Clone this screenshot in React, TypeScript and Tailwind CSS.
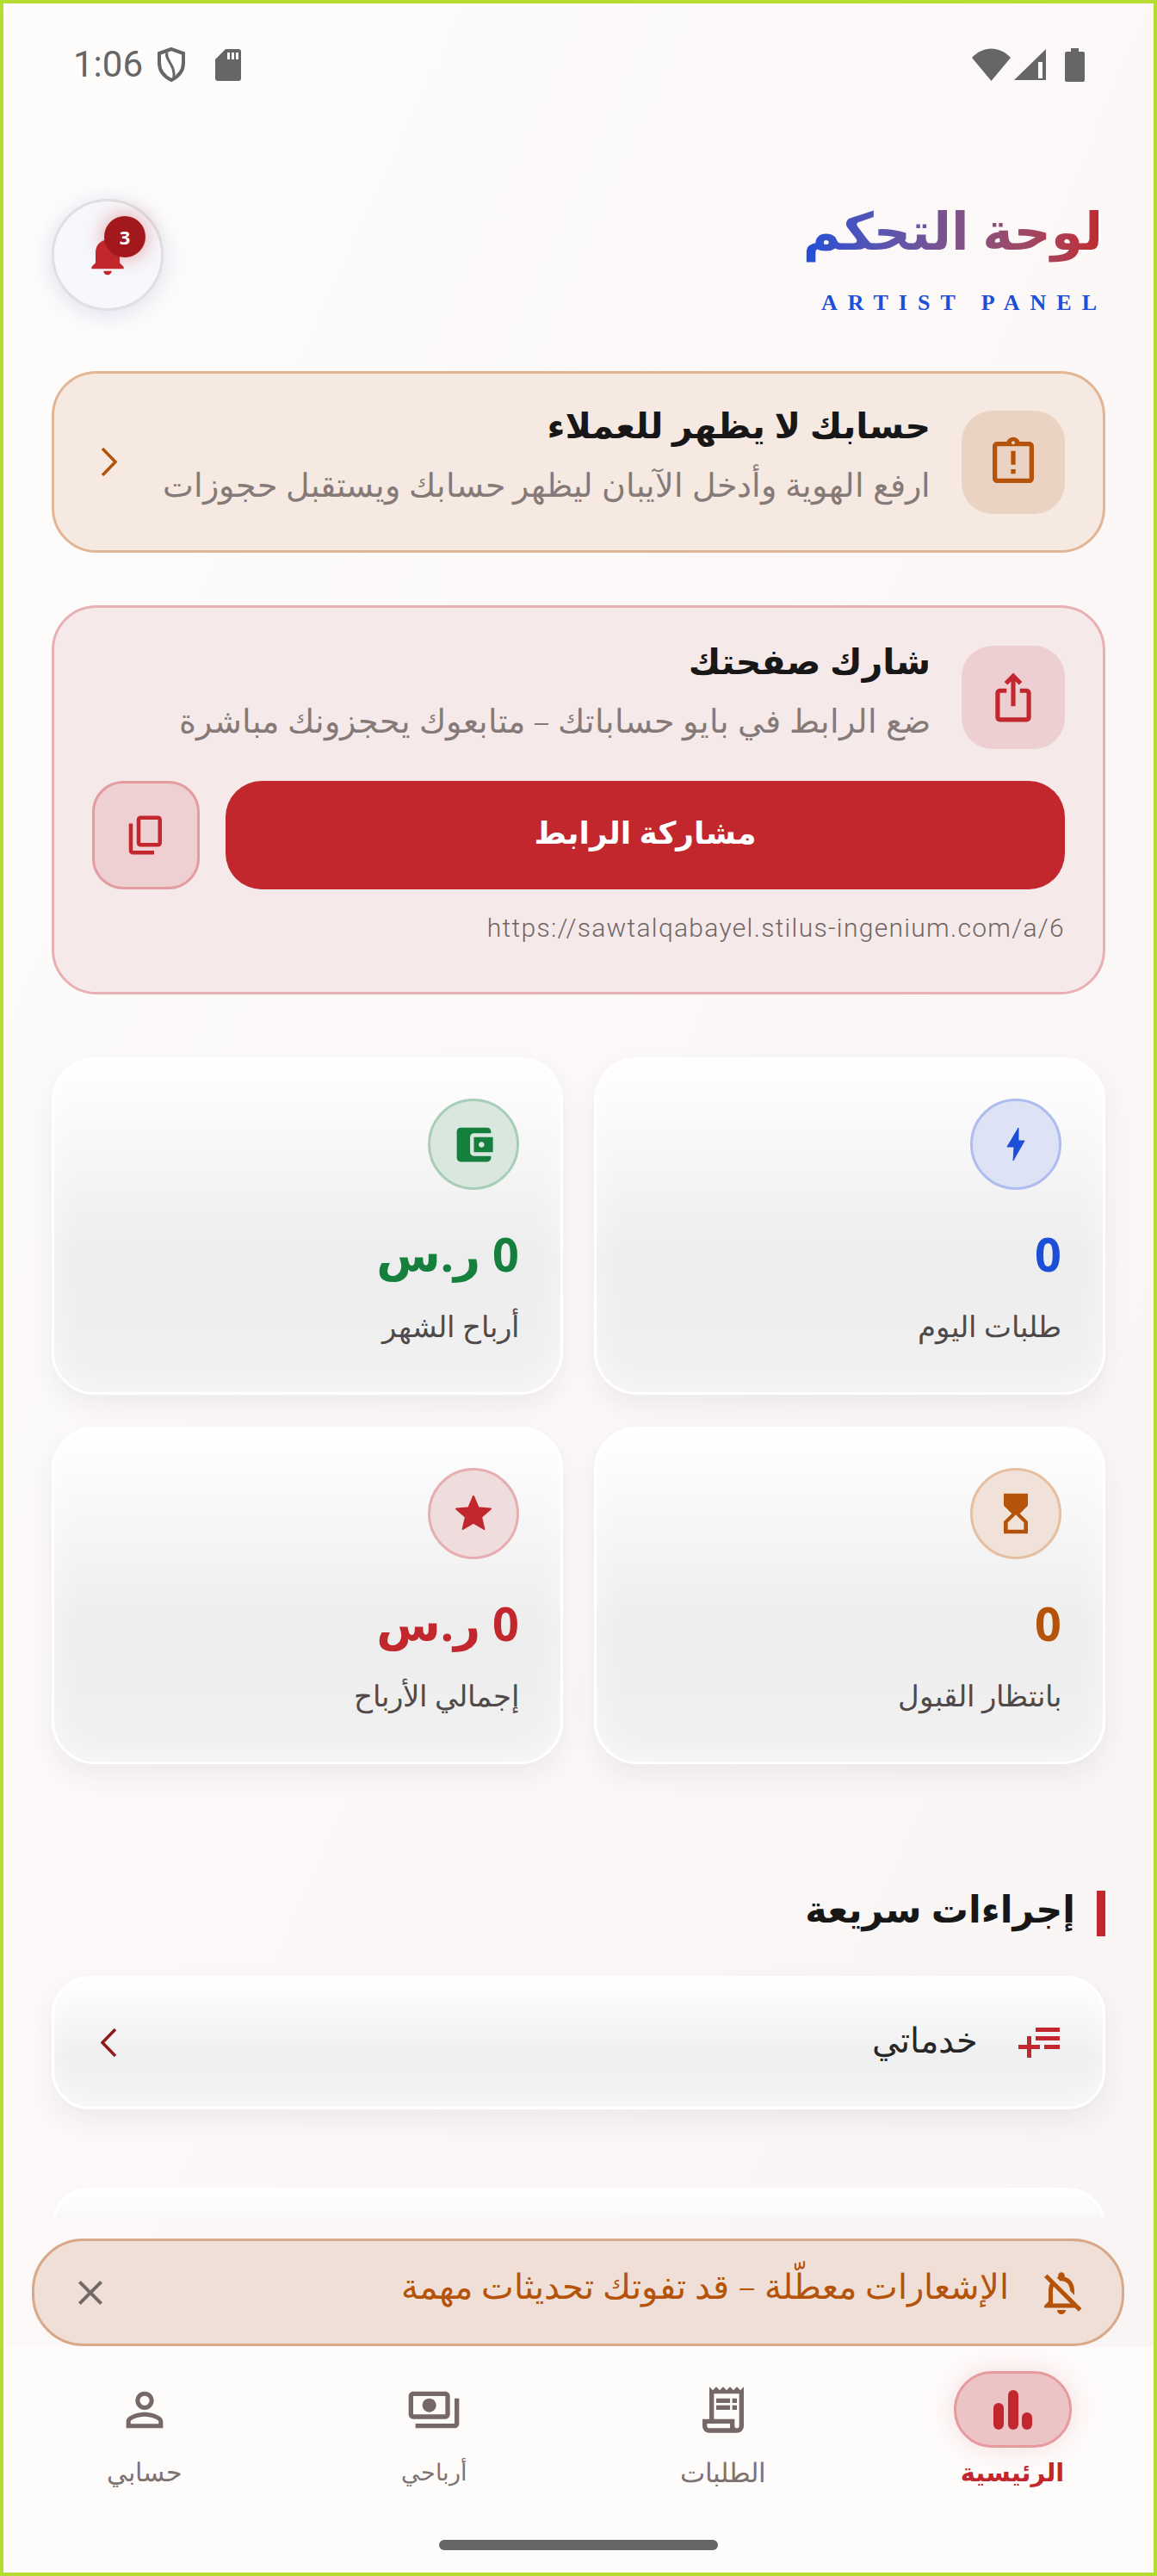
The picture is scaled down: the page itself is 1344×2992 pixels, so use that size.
const arabic = "font-['Noto_Sans','DejaVu_Sans',sans-serif]";

const stats = [
  { label: "طلبات اليوم", value: "0", color: "text-[#1d4ed8]", ring: "border-[#aebcf0] bg-[#dde3f4]", kind: "zap" },
  { label: "أرباح الشهر", value: "0 ر.س", color: "text-[#15803d]", ring: "border-[#a8cdb8] bg-[#d9e7df]", kind: "wallet" },
  { label: "بانتظار القبول", value: "0", color: "text-[#b45309]", ring: "border-[#e5bfa0] bg-[#f0e2d8]", kind: "hourglass" },
  { label: "إجمالي الأرباح", value: "0 ر.س", color: "text-[#c1272d]", ring: "border-[#e6aeb0] bg-[#efdcdd]", kind: "star" },
];

const StatIcon = ({ kind }: { kind: string }) => {
  if (kind === "zap")
    return (
      <svg viewBox="0 0 22 40" className="w-[22px] h-[40px]" fill="#1d4ed8" stroke="#1d4ed8" strokeLinejoin="round">
        <path d="M14 1 1 23h8l-1 16 13-23h-7z" />
      </svg>
    );
  if (kind === "star")
    return (
      <svg viewBox="0 0 24 24" className="w-12 h-12" fill="#c1272d" stroke="#c1272d" strokeLinejoin="round">
        <path d="M12 17.27 18.18 21l-1.64-7.03L22 9.24l-7.19-.61L12 2 9.19 8.63 2 9.24l5.46 4.73L5.82 21z" />
      </svg>
    );
  if (kind === "wallet")
    return (
      <svg viewBox="0 0 24 24" className="w-[53px] h-[53px]" fill="#15803d">
        <path d="M21 18v1c0 1.1-.9 2-2 2H5c-1.11 0-2-.9-2-2V5c0-1.1.89-2 2-2h14c1.1 0 2 .9 2 2v1h-9c-1.11 0-2 .9-2 2v8c0 1.1.89 2 2 2h9zm-9-2h10V8H12v8zm4-2.5c-.83 0-1.5-.67-1.5-1.5s.67-1.5 1.5-1.5 1.5.67 1.5 1.5-.67 1.5-1.5 1.5z" />
      </svg>
    );
  return (
    <svg viewBox="0 0 24 24" className="w-[56px] h-[56px]" fill="#b45309">
      <path d="M6 2v6h.01L6 8.01 10 12l-4 4 .01.01H6V22h12v-5.99h-.01L18 16l-4-4 4-3.99-.01-.01H18V2H6zm10 14.5V20H8v-3.5l4-4 4 4z" />
    </svg>
  );
};

const StatusBar = () => (
  <div dir="ltr" className="h-[142px] shrink-0 flex items-center justify-between pl-[81px] pr-[80px] text-[#666666]">
    <div className="flex items-center">
      <span className="font-['Roboto'] text-[42px] leading-none w-[97px]">1:06</span>
      <svg viewBox="0 0 34 41" className="w-[34px] h-[41px] mt-[1px]" fill="none" stroke="#666666" strokeWidth="4">
        <path d="M17 2 3 7v11c0 9 6 16 14 20 8-4 14-11 14-20V7z" />
        <path d="M12 6c-3 8 10 14 8 30" strokeWidth="3" />
      </svg>
      <svg viewBox="0 0 30 37" className="w-[30px] h-[37px] ml-[34px]" fill="#666666">
        <path d="M12 0h15a3 3 0 0 1 3 3v31a3 3 0 0 1-3 3H3a3 3 0 0 1-3-3V12z" />
        <path d="M14 4h3v8h-3zm5 0h3v8h-3zm5 0h3v8h-3z" fill="#fcfafa" />
      </svg>
    </div>
    <div className="flex items-center">
      <svg viewBox="0 0 45 38" className="w-[45px] h-[38px]" fill="#666666">
        <path d="M0 11C13-3 32-3 45 11L22.5 38z" />
      </svg>
      <svg viewBox="0 0 37 36" className="w-[37px] h-[36px] ml-[4px]" fill="#666666">
        <path d="M37 0v36H0z" />
        <path d="M28 15h5v19h-5z" fill="#fcfafa" />
      </svg>
      <svg viewBox="0 0 23 39" className="w-[23px] h-[39px] ml-[22px]" fill="#666666">
        <path d="M7 0h9v4h5a2 2 0 0 1 2 2v31a2 2 0 0 1-2 2H2a2 2 0 0 1-2-2V6a2 2 0 0 1 2-2h5z" />
      </svg>
    </div>
  </div>
);

const Header = () => (
  <div className="flex items-start justify-between h-[130px] mt-[85px] mb-[70px]">
    <div className="flex flex-col items-start mt-[-6px] mr-[3px]">
      <h1 className="text-[60px] leading-[84px] font-bold bg-gradient-to-l from-[#c1272d] to-[#1d4ed8] bg-clip-text text-transparent">
        لوحة التحكم
      </h1>
      <span dir="ltr" className="self-start font-['Liberation_Serif'] font-bold text-[26px] leading-[30px] tracking-[12px] text-[#1d4ed8] mt-[28px] mr-[-5px]">
        ARTIST PANEL
      </span>
    </div>
    <div className="relative w-[130px] h-[130px] rounded-full border-[3px] border-[#e2dfe2] bg-[#f7f8fc] shadow-[0_4px_28px_rgba(90,100,190,0.2)] flex items-center justify-center">
      <svg viewBox="0 0 24 24" className="w-[56px] h-[56px]" fill="#c1272d">
        <path d="M12 22c1.1 0 2-.9 2-2h-4c0 1.1.9 2 2 2zm6-6v-5c0-3.07-1.63-5.64-4.5-6.32V4c0-.83-.67-1.5-1.5-1.5s-1.5.67-1.5 1.5v.68C7.64 5.36 6 7.92 6 11v5l-2 2v1h16v-1l-2-2z" />
      </svg>
      <span className="absolute left-[58px] top-[17px] w-[48px] h-[48px] rounded-full bg-[#a3181c] text-white text-[22px] font-bold font-['Noto_Sans'] flex items-center justify-center shadow-[0_0_24px_rgba(193,39,45,0.45)]">
        3
      </span>
    </div>
  </div>
);

const AlertCard = () => (
  <div className="flex items-center gap-[36px] h-[211px] px-[44px] rounded-[52px] border-[3px] border-[#e2b594] bg-[#f5e9e2]">
    <div className="w-[120px] h-[120px] shrink-0 rounded-[36px] bg-[#ebd3c3] flex items-center justify-center">
      <svg viewBox="0 0 24 24" className="w-[64px] h-[64px]" fill="#b45309">
        <path d="M11 15h2v2h-2zm0-8h2v6h-2zm8-4h-4.18C14.4 1.84 13.3 1 12 1c-1.3 0-2.4.84-2.82 2H5c-.14 0-.27.01-.4.04-.39.08-.74.28-1.01.55-.18.18-.33.4-.43.64-.1.23-.16.49-.16.77v14c0 .27.06.54.16.78s.25.45.43.64c.27.27.62.47 1.01.55.13.02.26.03.4.03h14c1.1 0 2-.9 2-2V5c0-1.1-.9-2-2-2zm-7-.25c.41 0 .75.34.75.75s-.34.75-.75.75-.75-.34-.75-.75.34-.75.75-.75zM19 19H5V5h14v14z" />
      </svg>
    </div>
    <div className="flex-1 flex flex-col gap-[17px] pb-[20px]">
      <div className="text-[41px] leading-[54px] font-bold text-[#171717]">حسابك لا يظهر للعملاء</div>
      <div className="text-[38px] leading-[50px] font-light text-[#857a78]">ارفع الهوية وأدخل الآيبان ليظهر حسابك ويستقبل حجوزات</div>
    </div>
    <svg viewBox="0 0 19 33" className="w-[19px] h-[33px] shrink-0 ml-[10px]" fill="none" stroke="#b45309" strokeWidth="3.5">
      <path d="M2 1l15 15.500L2 32" />
    </svg>
  </div>
);

const ShareCard = () => (
  <div className="mt-[61px] h-[452px] px-[44px] pt-[44px] rounded-[52px] border-[3px] border-[#e8b0b2] bg-[#f6e9ea]">
    <div className="flex items-center gap-[36px] h-[120px]">
      <div className="w-[120px] h-[120px] shrink-0 rounded-[36px] bg-[#edcfd2] flex items-center justify-center">
        <svg viewBox="0 0 24 24" className="w-[62px] h-[62px]" fill="#c1272d">
          <path d="M16 5l-1.42 1.42-1.59-1.59V16h-1.98V4.83L9.42 6.420 8 5l4-4 4 4zm4 5v11c0 1.1-.9 2-2 2H6c-1.11 0-2-.9-2-2V10c0-1.11.89-2 2-2h3v2H6v11h12V10h-3V8h3c1.1 0 2 .89 2 2z" />
        </svg>
      </div>
      <div className="flex-1 flex flex-col gap-[17px] pb-[20px]">
        <div className="text-[41px] leading-[54px] font-bold text-[#171717]">شارك صفحتك</div>
        <div className="text-[38px] leading-[50px] font-light text-[#857a78]">ضع الرابط في بايو حساباتك – متابعوك يحجزونك مباشرة</div>
      </div>
    </div>
    <div className="flex items-stretch gap-[30px] mt-[37px]">
      <div className="flex-1 h-[126px] rounded-[42px] bg-[#c1272d] text-white text-[36px] font-bold flex items-center justify-center pb-[6px]">
        مشاركة الرابط
      </div>
      <div className="w-[125px] h-[126px] rounded-[36px] border-[3px] border-[#e39ca0] bg-[#eecfd2] flex items-center justify-center">
        <svg viewBox="0 0 24 24" className="w-[54px] h-[54px]" fill="#c1272d">
          <path d="M9 18q-.825 0-1.413-.588T7 16V4q0-.825.587-1.413T9 2h9q.825 0 1.413.587T20 4v12q0 .825-.587 1.413T18 18H9Zm0-2h9V4H9v12Zm-4 6q-.825 0-1.413-.588T3 20V6h2v14h11v2H5Z" />
        </svg>
      </div>
    </div>
    <div dir="ltr" className="mt-[26px] text-right font-['Roboto'] font-light text-[30px] leading-[38px] tracking-[1.3px] text-[#6f6664]">
      https://sawtalqabayel.stilus-ingenium.com/a/6
    </div>
  </div>
);

const StatsGrid = () => (
  <div className="grid grid-cols-2 gap-x-[36px] gap-y-[37px] mt-[73px]">
    {stats.map((s) => (
      <div
        key={s.label}
        className="h-[392px] px-[48px] pt-[45px] rounded-[50px] border-[3px] border-white bg-gradient-to-b from-white via-[#eeeded] via-60% to-[#f1f1f1] shadow-[0_14px_30px_rgba(60,50,50,0.07),inset_0_0_40px_rgba(255,255,255,0.6)] flex flex-col items-start"
      >
        <div className={`w-[106px] h-[106px] rounded-full border-[3px] flex items-center justify-center ${s.ring}`}>
          <StatIcon kind={s.kind} />
        </div>
        <div className={`mt-[32px] text-[54px] leading-[84px] font-bold ${s.color}`}>{s.value}</div>
        <div className="mt-[20px] text-[34px] leading-[44px] font-light text-[#4f4a49]">{s.label}</div>
      </div>
    ))}
  </div>
);

const QuickActions = () => (
  <>
    <div className="flex items-center gap-[25px] mt-[147px] h-[53px]">
      <span className="w-[10px] h-[53px] bg-[#c1272d]" />
      <h2 className="text-[43px] leading-[53px] font-bold text-[#171717] pb-[12px]">إجراءات سريعة</h2>
    </div>
    <div className="flex items-center h-[155px] mt-[46px] px-[44px] rounded-[44px] border-[3px] border-white bg-gradient-to-b from-white via-[#f0efef] via-60% to-[#f4f4f4] shadow-[0_14px_30px_rgba(60,50,50,0.07),inset_0_0_30px_rgba(255,255,255,0.6)]">
      <svg viewBox="0 0 48 35" className="w-[48px] h-[35px] mr-[6px] shrink-0" fill="#c1272d">
        <path d="M20 0h28v5H20zM20 10h28v5H20zM30 20h18v5H30zM0 20h25v5H0zM10 10h5v25h-5z" />
      </svg>
      <span className="mr-[47px] flex-1 text-[40px] leading-[48px] font-light text-[#262626] pb-[8px]">خدماتي</span>
      <svg viewBox="0 0 19 33" className="w-[19px] h-[33px] ml-[10px] shrink-0" fill="none" stroke="#8f1a1e" strokeWidth="3.5">
        <path d="M17 1 2 16.500 17 32" />
      </svg>
    </div>
    <div className="h-[155px] mt-[91px] rounded-t-[44px] border-[3px] border-white bg-gradient-to-b from-white via-[#f0efef] via-60% to-[#f4f4f4]" />
  </>
);

const Snackbar = () => (
  <div className="absolute left-[33px] right-[34px] top-[2596px] h-[125px] rounded-[60px] border-[3px] border-[#d9a888] bg-[#efdfd6] flex items-center pr-[40px] pl-[46px]">
    <svg viewBox="0 0 24 24" className="w-[60px] h-[60px] shrink-0" fill="#b45309">
      <path d="M12 22c1.1 0 2-.9 2-2h-4c0 1.100.9 2 2 2zm0-15.500c2.490 0 4 2.020 4 4.500v.1l2 2V11c0-3.070-1.630-5.640-4.500-6.320V4c0-.83-.67-1.500-1.500-1.500s-1.500.67-1.500 1.500v.68c-.24.06-.47.15-.69.23l1.640 1.640c.18-.02.36-.05.55-.05zM5.410 3.350 4 4.760l2.810 2.810C6.290 8.570 6 9.740 6 11v5l-2 2v1h14.240l1.740 1.740 1.410-1.410L5.410 3.350zM16 17H8v-6c0-.68.12-1.320.34-1.900L16 16.760V17z" />
    </svg>
    <span className="mr-[31px] flex-1 text-[39.5px] leading-[44px] font-light text-[#b45309] pb-[16px]">الإشعارات معطّلة – قد تفوتك تحديثات مهمة</span>
    <svg viewBox="0 0 24 24" className="w-[48px] h-[48px] shrink-0 ml-[-5px]" fill="#706a68">
      <path d="M19 6.410 17.590 5 12 10.590 6.410 5 5 6.410 10.590 12 5 17.590 6.410 19 12 13.410 17.590 19 19 17.590 13.410 12z" />
    </svg>
  </div>
);

const navIcons: Record<string, string> = {
  orders:
    "M19.500 3.500 18 2l-1.500 1.500L15 2l-1.500 1.500L12 2l-1.500 1.500L9 2 7.500 3.500 6 2v14H3v3c0 1.660 1.340 3 3 3h12c1.660 0 3-1.340 3-3V2l-1.500 1.500zM15 20H6c-.55 0-1-.45-1-1v-1h10v2zm4-1c0 .55-.45 1-1 1s-1-.45-1-1v-3H8V5h11v14zM9 7h6v2H9zm7 0h2v2h-2zm-7 3h6v2H9zm7 0h2v2h-2z",
  earnings:
    "M19 14V6c0-1.100-.9-2-2-2H3c-1.100 0-2 .9-2 2v8c0 1.100.9 2 2 2h14c1.100 0 2-.9 2-2zm-2 0H3V6h14v8zm-7-7c-1.660 0-3 1.340-3 3s1.340 3 3 3 3-1.340 3-3-1.340-3-3-3zm13 0v11c0 1.100-.9 2-2 2H4v-2h17V7h2z",
  account:
    "M12 5.900a2.100 2.100 0 1 1 0 4.200 2.100 2.100 0 0 1 0-4.200m0 9c2.970 0 6.100 1.460 6.100 2.100v1.100H5.900V17c0-.64 3.130-2.100 6.100-2.100M12 4C9.790 4 8 5.790 8 8s1.790 4 4 4 4-1.790 4-4-1.790-4-4-4zm0 9c-2.670 0-8 1.340-8 4v3h16v-3c0-2.660-5.330-4-8-4z",
};

const NavItem = ({ label, icon, size }: { label: string; icon: string; size: string }) => (
  <div className="flex flex-col items-center">
    <div className="h-[89px] flex items-center justify-center">
      <svg viewBox="0 0 24 24" className="w-[64px] h-[64px]" fill="#756866">
        <path d={navIcons[icon]} />
      </svg>
    </div>
    <span className={`mt-[6px] leading-[44px] font-light text-[#7d7371] ${size}`}>{label}</span>
  </div>
);

const BottomNav = () => (
  <div className="mt-auto h-[262px] shrink-0 bg-[#fefbfb] pt-[28px] flex flex-col">
    <div className="grid grid-cols-4 -mx-[4px]">
      <div className="flex flex-col items-center">
        <div className="w-[137px] h-[89px] rounded-[44px] border-[3px] border-[#e59a9e] bg-[#edc4c6] shadow-[0_0_30px_rgba(193,39,45,0.15)] flex items-center justify-center">
          <svg viewBox="0 0 45 46" className="w-[45px] h-[46px]" fill="#c1272d">
            <rect x="0" y="15" width="12" height="31" rx="6" />
            <rect x="17" y="0" width="12" height="46" rx="6" />
            <rect x="33" y="26" width="12" height="20" rx="6" />
          </svg>
        </div>
        <span className="mt-[6px] text-[29px] leading-[44px] font-bold text-[#c1272d]">الرئيسية</span>
      </div>
      <NavItem label="الطلبات" icon="orders" size="text-[31px]" />
      <NavItem label="أرباحي" icon="earnings" size="text-[27px]" />
      <NavItem label="حسابي" icon="account" size="text-[30px]" />
    </div>
    <div className="mt-auto mb-[26px] mx-auto w-[324px] h-[12px] rounded-full bg-[#666666]" />
  </div>
);

export default function App() {
  return (
    <div dir="rtl" className={`relative w-[1344px] h-[2992px] overflow-hidden border-[4px] border-[#b5dc30] bg-gradient-to-br from-[#fefdfc] via-[#fbf8f7] to-[#f8f4f3] flex flex-col ${arabic}`}>
      <StatusBar />
      <div className="h-[2429px] shrink-0 overflow-hidden px-[56px]">
        <Header />
        <AlertCard />
        <ShareCard />
        <StatsGrid />
        <QuickActions />
      </div>
      <Snackbar />
      <BottomNav />
    </div>
  );
}
